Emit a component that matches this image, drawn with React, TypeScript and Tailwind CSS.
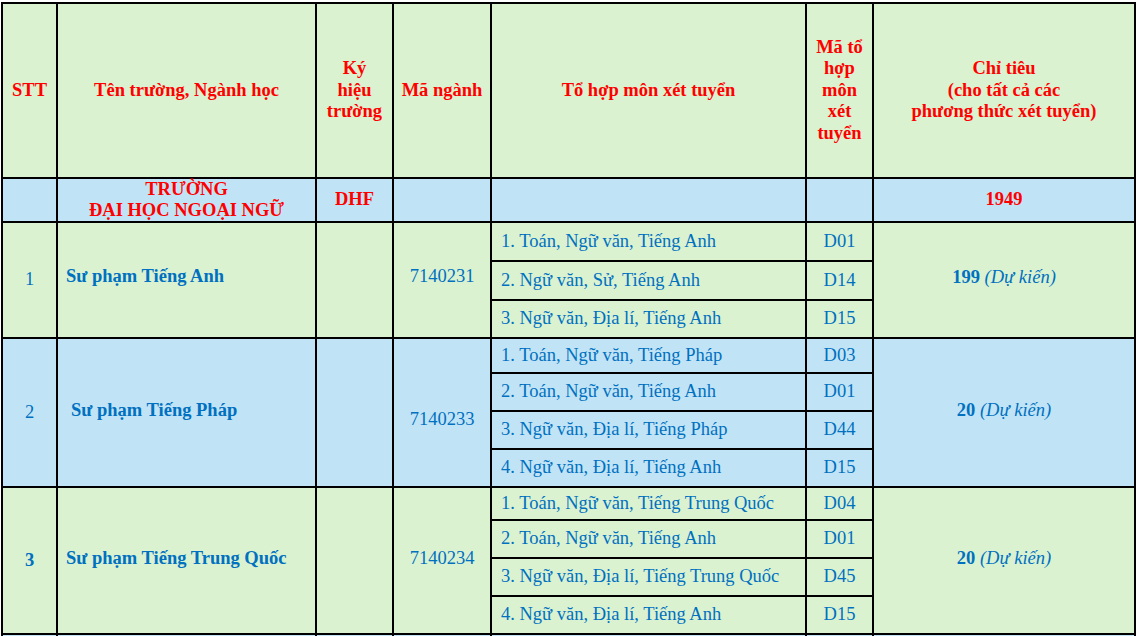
import React from 'react';

type Sub = { text: string; code: string; h: string };
type Group = {
  stt: string;
  sttBold?: boolean;
  name: string;
  namePad: string;
  code: string;
  codeClass: string;
  quota: string;
  bg: string;
  subs: Sub[];
};

const groups: Group[] = [
  {
    stt: '1',
    name: 'Sư phạm Tiếng Anh',
    namePad: 'pl-[8px] pb-[6px]',
    code: '7140231',
    codeClass: 'pb-[6px]',
    quota: '199',
    bg: 'bg-[#daf2d0]',
    subs: [
      { text: '1. Toán, Ngữ văn, Tiếng Anh', code: 'D01', h: 'h-[39px]' },
      { text: '2. Ngữ văn, Sử, Tiếng Anh', code: 'D14', h: 'h-[39px]' },
      { text: '3. Ngữ văn, Địa lí, Tiếng Anh', code: 'D15', h: 'h-[38px]' },
    ],
  },
  {
    stt: '2',
    name: 'Sư phạm Tiếng Pháp',
    namePad: 'pl-[13px] pb-[4px]',
    code: '7140233',
    codeClass: 'pt-[14px]',
    quota: '20',
    bg: 'bg-[#c0e4f5]',
    subs: [
      { text: '1. Toán, Ngữ văn, Tiếng Pháp', code: 'D03', h: 'h-[35px]' },
      { text: '2. Toán, Ngữ văn, Tiếng Anh', code: 'D01', h: 'h-[38px]' },
      { text: '3. Ngữ văn, Địa lí, Tiếng Pháp', code: 'D44', h: 'h-[38px]' },
      { text: '4. Ngữ văn, Địa lí, Tiếng Anh', code: 'D15', h: 'h-[38px]' },
    ],
  },
  {
    stt: '3',
    sttBold: true,
    name: 'Sư phạm Tiếng Trung Quốc',
    namePad: 'pl-[8px] pb-[4px]',
    code: '7140234',
    codeClass: 'pb-[4px]',
    quota: '20',
    bg: 'bg-[#daf2d0]',
    subs: [
      { text: '1. Toán, Ngữ văn, Tiếng Trung Quốc', code: 'D04', h: 'h-[33px]' },
      { text: '2. Toán, Ngữ văn, Tiếng Anh', code: 'D01', h: 'h-[38px]' },
      { text: '3. Ngữ văn, Địa lí, Tiếng Trung Quốc', code: 'D45', h: 'h-[38px]' },
      { text: '4. Ngữ văn, Địa lí, Tiếng Anh', code: 'D15', h: 'h-[38px]' },
    ],
  },
];

const cell = 'border-2 border-black p-0';

export default function App() {
  return (
    <div className="h-[636px] w-[1137px] overflow-hidden bg-white pt-[2px] pl-[1px] font-['Liberation_Serif',serif]">
      <table className="table-fixed border-collapse w-[1133px] text-[18.5px] leading-[21.5px]">
        <colgroup>
          <col className="w-[55px]" />
          <col className="w-[259px]" />
          <col className="w-[77px]" />
          <col className="w-[98px]" />
          <col className="w-[315px]" />
          <col className="w-[67px]" />
          <col className="w-[262px]" />
        </colgroup>
        <tbody>
          <tr className="h-[175px] bg-[#daf2d0] text-center align-middle font-bold text-[#ff0000]">
            <td className={cell}>STT</td>
            <td className={cell}>Tên trường, Ngành học</td>
            <td className={cell}>
              Ký
              <br />
              hiệu
              <br />
              trường
            </td>
            <td className={cell}>Mã ngành</td>
            <td className={cell}>Tổ hợp môn xét tuyển</td>
            <td className={cell}>
              Mã tổ
              <br />
              hợp
              <br />
              môn
              <br />
              xét
              <br />
              tuyển
            </td>
            <td className={cell}>
              Chỉ tiêu
              <br />
              (cho tất cả các
              <br />
              phương thức xét tuyển)
            </td>
          </tr>
          <tr className="h-[44px] bg-[#c0e4f5] text-center align-middle font-bold text-[#ff0000]">
            <td className={cell}></td>
            <td className={`${cell} leading-[21px]`}>
              TRƯỜNG
              <br />
              ĐẠI HỌC NGOẠI NGỮ
            </td>
            <td className={cell}>DHF</td>
            <td className={cell}></td>
            <td className={cell}></td>
            <td className={cell}></td>
            <td className={cell}>1949</td>
          </tr>
          {groups.map((g) =>
            g.subs.map((s, i) => (
              <tr key={g.stt + '-' + i} className={`${s.h} ${g.bg} align-middle text-[#0070c0]`}>
                {i === 0 && (
                  <>
                    <td rowSpan={g.subs.length} className={`${cell} text-center ${g.sttBold ? 'font-bold' : ''}`}>
                      {g.stt}
                    </td>
                    <td rowSpan={g.subs.length} className={`${cell} ${g.namePad} text-left font-bold`}>
                      {g.name}
                    </td>
                    <td rowSpan={g.subs.length} className={cell}></td>
                    <td rowSpan={g.subs.length} className={`${cell} ${g.codeClass} text-center`}>
                      {g.code}
                    </td>
                  </>
                )}
                <td className={`${cell} pl-[9px] text-left whitespace-nowrap`}>{s.text}</td>
                <td className={`${cell} text-center`}>{s.code}</td>
                {i === 0 && (
                  <td rowSpan={g.subs.length} className={`${cell} pb-[4px] text-center`}>
                    <span className="font-bold">{g.quota}</span> <span className="italic">(Dự kiến)</span>
                  </td>
                )}
              </tr>
            ))
          )}
          <tr className="h-[40px] bg-[#c0e4f5]">
            <td className={cell}></td>
            <td className={cell}></td>
            <td className={cell}></td>
            <td className={cell}></td>
            <td className={cell}></td>
            <td className={cell}></td>
            <td className={cell}></td>
          </tr>
        </tbody>
      </table>
    </div>
  );
}
